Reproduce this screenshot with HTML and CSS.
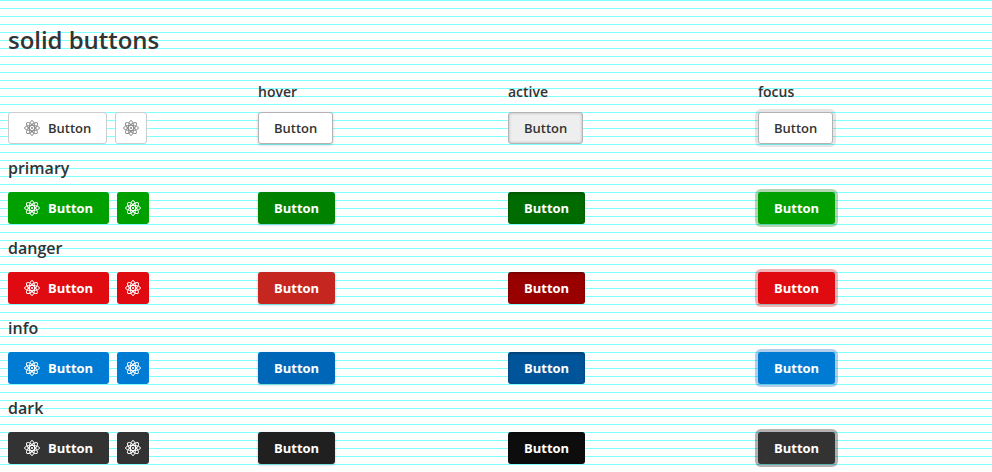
FILE: index.html
```html
<!DOCTYPE html>
<html lang="en">
<head>
<meta charset="utf-8">
<title>solid buttons</title>
<link rel="stylesheet" href="styles.css">
</head>
<body>
<svg class="defs" width="0" height="0">
  <symbol id="atom" viewBox="0 0 16 16">
    <g fill="none" stroke="currentColor" stroke-width=".95">
      <ellipse cx="8" cy="8" rx="7.5" ry="2.6"/>
      <ellipse cx="8" cy="8" rx="2.6" ry="7.5"/>
      <ellipse cx="8" cy="8" rx="7.3" ry="2.6" transform="rotate(45 8 8)"/>
      <ellipse cx="8" cy="8" rx="7.3" ry="2.6" transform="rotate(-45 8 8)"/>
    </g>
    <circle cx="8" cy="8" r="1.1" fill="currentColor"/>
  </symbol>
</svg>
<h1>solid buttons</h1>
<div class="row labels"><span></span><h3>hover</h3><h3>active</h3><h3>focus</h3></div>
<div class="row">
  <div class="pair"><button class="btn"><svg class="icon"><use href="#atom"/></svg>Button</button><button class="btn square"><svg class="icon"><use href="#atom"/></svg></button></div>
  <button class="btn hover">Button</button><button class="btn active">Button</button><button class="btn focus">Button</button>
</div>
<h2>primary</h2>
<div class="row primary">
  <div class="pair"><button class="btn"><svg class="icon"><use href="#atom"/></svg>Button</button><button class="btn square"><svg class="icon"><use href="#atom"/></svg></button></div>
  <button class="btn hover">Button</button><button class="btn active">Button</button><button class="btn focus">Button</button>
</div>
<h2>danger</h2>
<div class="row danger">
  <div class="pair"><button class="btn"><svg class="icon"><use href="#atom"/></svg>Button</button><button class="btn square"><svg class="icon"><use href="#atom"/></svg></button></div>
  <button class="btn hover">Button</button><button class="btn active">Button</button><button class="btn focus">Button</button>
</div>
<h2>info</h2>
<div class="row info">
  <div class="pair"><button class="btn"><svg class="icon"><use href="#atom"/></svg>Button</button><button class="btn square"><svg class="icon"><use href="#atom"/></svg></button></div>
  <button class="btn hover">Button</button><button class="btn active">Button</button><button class="btn focus">Button</button>
</div>
<h2>dark</h2>
<div class="row dark">
  <div class="pair"><button class="btn"><svg class="icon"><use href="#atom"/></svg>Button</button><button class="btn square"><svg class="icon"><use href="#atom"/></svg></button></div>
  <button class="btn hover">Button</button><button class="btn active">Button</button><button class="btn focus">Button</button>
</div>
</body>
</html>
```
FILE: styles.css
```css
* { box-sizing: border-box; }
html { background: #fff repeating-linear-gradient(to bottom, #80ffff 0, #80ffff 1px, #fff 1px, #fff 8px); }
body { margin: 0; padding: 24px 8px 8px; height: 472px; overflow: hidden; font-family: "Open Sans", sans-serif; color: #333; }
.defs { display: block; }
h1, h2, h3 { margin: 0; font-weight: 600; }
h1 { font-size: 24px; line-height: 32px; letter-spacing: -.04px; }
h2 { font-size: 16px; line-height: 24px; margin: 12px 0; }
h3 { font-size: 14px; line-height: 24px; }
.row { display: grid; grid-template-columns: repeat(4, 250px); height: 32px; justify-items: start; }
.labels { height: 24px; margin: 24px 0 8px; }
.pair { display: flex; gap: 8px; }
.btn { display: flex; align-items: center; height: 32px; margin: 0; padding: 0 15px; border: 1px solid #b3b3b3; border-radius: 3px; background: #fff; color: #333; font: 600 13px/16px "Open Sans", sans-serif; }
.pair .btn { border-color: #ccc; }
.square { width: 32px; padding: 0; justify-content: center; }
.icon { width: 16px; height: 16px; margin-right: 8px; color: #8c8c8c; }
.square .icon { margin: 0; }
.btn.hover { box-shadow: 0 1px 3px rgba(0,0,0,.2); }
.btn.active { background: #eee; box-shadow: inset 0 0 3px rgba(0,0,0,.25); }
.btn.focus { box-shadow: 0 0 0 3px rgba(0,0,0,.1); }
.primary .btn, .danger .btn, .info .btn, .dark .btn { border: 0; padding: 0 16px; color: #fff; font-weight: 700; }
.primary .icon, .danger .icon, .info .icon, .dark .icon { color: #fff; }
.primary .square, .danger .square, .info .square, .dark .square { padding: 0; }
.primary .active, .danger .active, .info .active, .dark .active { box-shadow: inset 0 1px 3px rgba(0,0,0,.35); }
.primary .btn { background: #00a000; }
.primary .hover { background: #008200; }
.primary .active { background: #006b00; }
.primary .btn.focus { box-shadow: 0 0 0 3px rgba(0,120,0,.3); }
.danger .btn { background: #df0b10; }
.danger .hover { background: #c52720; }
.danger .active { background: #990000; }
.danger .btn.focus { box-shadow: 0 0 0 3px rgba(204,10,16,.3); }
.info .btn { background: #007bd3; }
.info .hover { background: #0067b8; }
.info .active { background: #005499; }
.info .btn.focus { box-shadow: 0 0 0 3px rgba(0,90,185,.3); }
.dark .btn { background: #333; }
.dark .hover { background: #202020; }
.dark .active { background: #0d0d0d; }
.dark .btn.focus { box-shadow: 0 0 0 3px rgba(0,0,0,.3); }
```
